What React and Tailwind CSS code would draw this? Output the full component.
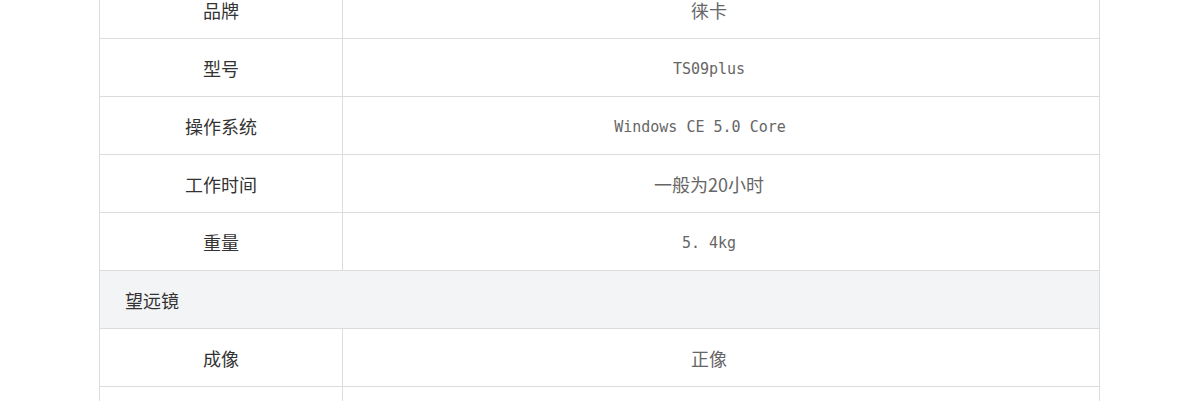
import React from 'react';

const rows = [
    { type: 'row', label: '品牌', value: '徕卡' },
    { type: 'row', label: '型号', value: 'TS09plus', mono: true },
    { type: 'row', label: '操作系统', value: 'Windows CE 5.0 Core\u00a0\u00a0', mono: true },
    { type: 'row', label: '工作时间', value: '一般为20小时' },
    { type: 'row', label: '重量', value: '5. 4kg', mono: true },
    { type: 'section', label: '望远镜' },
    { type: 'row', label: '成像', value: '正像' },
    { type: 'row', label: '放大倍数', value: '30倍' },
];

function App() {
    return (
        <div className="h-[401px] overflow-hidden bg-white font-['Noto_Sans_CJK_SC',sans-serif]">
            <div className="ml-[99px] -mt-[20px] w-[1001px] border border-[#dcdcdc]">
                {rows.map((row, i) =>
                    row.type === 'section' ? (
                        <div key={i} className="flex h-[58px] items-center border-b border-[#dcdcdc] bg-[#f3f4f6] pl-[25px] pt-[2px] text-[18px] text-[#333]">
                            {row.label}
                        </div>
                    ) : (
                        <div key={i} className="flex h-[58px] border-b border-[#dcdcdc]">
                            <div className="flex w-[243px] items-center justify-center border-r border-[#dcdcdc] pt-[1px] text-[18px] text-[#333]">
                                {row.label}
                            </div>
                            <div
                                className={
                                    row.mono
                                        ? "flex flex-1 items-center justify-center pr-[24px] pt-[4px] font-['DejaVu_Sans_Mono',monospace] text-[15px] text-[#666]"
                                        : 'flex flex-1 items-center justify-center pr-[24px] pt-[1px] text-[18px] text-[#666]'
                                }
                            >
                                <span className="whitespace-pre">{row.value}</span>
                            </div>
                        </div>
                    )
                )}
            </div>
        </div>
    );
}

export default App;
